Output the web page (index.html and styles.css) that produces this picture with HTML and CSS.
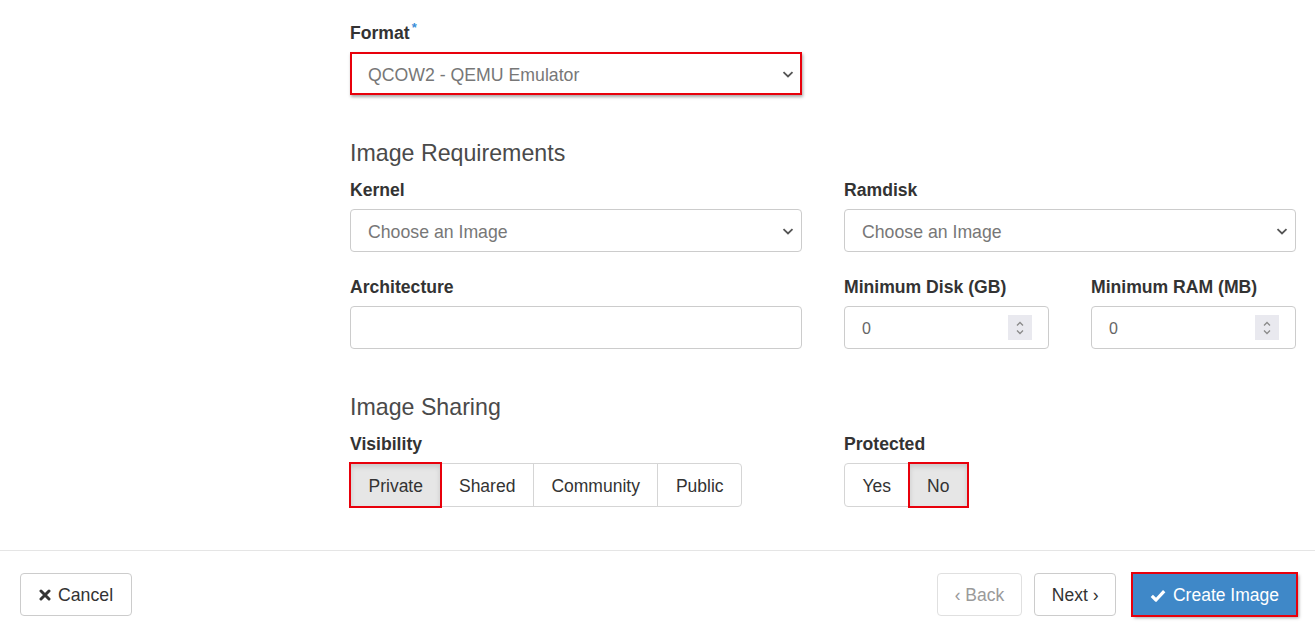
FILE: index.html
```html
<!DOCTYPE html>
<html>
<head>
<meta charset="utf-8">
<link rel="stylesheet" href="styles.css">
</head>
<body>
<div class="page">
  <div class="body">
    <div class="side"></div>
    <div class="form">
      <div class="row2">
        <div class="fg">
          <div class="lbl">Format<span class="req">*</span></div>
          <div class="select hl">
            <span class="val">QCOW2 - QEMU Emulator</span>
            <svg class="chev" width="12" height="7" viewBox="0 0 12 7"><path d="M1.5 1.2 L6 5.5 L10.5 1.2" fill="none" stroke="#555" stroke-width="1.8"/></svg>
          </div>
        </div>
        <div></div>
      </div>

      <h4 class="section first">Image Requirements</h4>
      <div class="row2">
        <div class="fg">
          <div class="lbl">Kernel</div>
          <div class="select">
            <span class="val">Choose an Image</span>
            <svg class="chev" width="12" height="7" viewBox="0 0 12 7"><path d="M1.5 1.2 L6 5.5 L10.5 1.2" fill="none" stroke="#555" stroke-width="1.8"/></svg>
          </div>
        </div>
        <div class="fg">
          <div class="lbl">Ramdisk</div>
          <div class="select">
            <span class="val">Choose an Image</span>
            <svg class="chev" width="12" height="7" viewBox="0 0 12 7"><path d="M1.5 1.2 L6 5.5 L10.5 1.2" fill="none" stroke="#555" stroke-width="1.8"/></svg>
          </div>
        </div>
      </div>
      <div class="row2 gap-top">
        <div class="fg">
          <div class="lbl">Architecture</div>
          <div class="input"></div>
        </div>
        <div class="row2">
          <div class="fg">
            <div class="lbl">Minimum Disk (GB)</div>
            <div class="input num">
              <span class="val">0</span>
              <span class="spin"><svg width="10" height="16" viewBox="0 0 10 16"><path d="M2 5.5 L5 2.5 L8 5.5 M2 10.5 L5 13.5 L8 10.5" fill="none" stroke="#8a8a8a" stroke-width="1.3"/></svg></span>
            </div>
          </div>
          <div class="fg">
            <div class="lbl">Minimum RAM (MB)</div>
            <div class="input num">
              <span class="val">0</span>
              <span class="spin"><svg width="10" height="16" viewBox="0 0 10 16"><path d="M2 5.5 L5 2.5 L8 5.5 M2 10.5 L5 13.5 L8 10.5" fill="none" stroke="#8a8a8a" stroke-width="1.3"/></svg></span>
            </div>
          </div>
        </div>
      </div>

      <h4 class="section">Image Sharing</h4>
      <div class="row2">
        <div class="fg">
          <div class="lbl">Visibility</div>
          <div class="btn-group">
            <span class="gbtn active hlb">Private</span>
            <span class="gbtn">Shared</span>
            <span class="gbtn">Community</span>
            <span class="gbtn">Public</span>
          </div>
        </div>
        <div class="fg">
          <div class="lbl">Protected</div>
          <div class="btn-group">
            <span class="gbtn">Yes</span>
            <span class="gbtn active hlb">No</span>
          </div>
        </div>
      </div>
    </div>
  </div>
  <div class="footer">
    <span class="btn cancel">
      <svg width="12" height="12" viewBox="0 0 12 12"><path d="M2 2 L10 10 M10 2 L2 10" stroke="#333" stroke-width="3" stroke-linecap="round"/></svg>
      Cancel
    </span>
    <div class="actions">
      <span class="btn disabled">‹ Back</span>
      <span class="btn next">Next ›</span>
      <span class="btn primary hlb">
        <svg width="16" height="13" viewBox="0 0 16 13"><path d="M1.8 6.8 L6 11 L14.2 2.2" fill="none" stroke="#fff" stroke-width="3.2" stroke-linejoin="round"/></svg>
        Create Image
      </span>
    </div>
  </div>
</div>
</body>
</html>
```

FILE: styles.css
```css
* { box-sizing: border-box; }
html, body { margin: 0; padding: 0; background: #fff; }
body {
  font-family: "Liberation Sans", Arial, Helvetica, sans-serif;
  font-size: 17.7px;
  color: #333;
}
.page { width: 1315px; height: 635px; overflow: hidden; }
.body {
  display: grid;
  grid-template-columns: 350px 1fr;
  padding: 20px 19px 43px 0;
  border-bottom: 1px solid #e5e5e5;
}
.row2 {
  display: grid;
  grid-template-columns: 1fr 1fr;
  column-gap: 42px;
}
.gap-top { margin-top: 22px; }
.lbl {
  font-weight: 700;
  font-size: 17.6px;
  line-height: 24px;
  height: 24px;
  padding-top: 1px;
  margin-bottom: 8px;
  color: #333;
  white-space: nowrap;
}
.req {
  color: #3a8fd9;
  font-size: 13px;
  vertical-align: top;
  position: relative;
  top: -5px;
  margin-left: 2px;
}
.section {
  margin: 45px 0 11px;
  font-size: 23.2px;
  font-weight: 400;
  line-height: 26px;
  color: #4a4a4a;
}
.select, .input {
  height: 43px;
  border: 1px solid #ccc;
  border-radius: 4px;
  display: flex;
  align-items: center;
  padding: 3px 7px 0 17px;
  color: #777;
  font-size: 17.7px;
  background: #fff;
}
.select .val { flex: 1; }
.select .chev { display: block; margin-top: -2px; }
.hl {
  border: 2px solid #e8000b;
  border-radius: 0;
  padding-left: 16px;
  padding-right: 6px;
  box-shadow: 1px 2px 3px rgba(0,0,0,0.35);
}
.num { padding-right: 16px; padding-top: 0; }
.num .val { flex: 1; font-size: 16px; color: #666; padding-top: 3px; }
.spin {
  width: 24px;
  height: 25px;
  background: #e9e9ef;
  display: flex;
  align-items: center;
  justify-content: center;
}
.btn-group { display: flex; }
.gbtn {
  height: 44px;
  display: flex;
  align-items: center;
  padding: 2px 17.5px 0;
  border: 1px solid #d5d5d5;
  margin-left: -1px;
  color: #333;
  background: #fff;
  font-size: 17.5px;
}
.gbtn:first-child { margin-left: 0; border-radius: 4px 0 0 4px; }
.gbtn:last-child { border-radius: 0 4px 4px 0; }
.gbtn.active {
  background: #e6e6e6;
  box-shadow: inset 0 3px 5px rgba(0,0,0,0.125);
}
.hlb {
  position: relative;
  z-index: 1;
  outline: 2px solid #e8000b;
  outline-offset: -1px;
}
.hlb.gbtn { border-radius: 0; }
.footer {
  display: flex;
  justify-content: space-between;
  align-items: center;
  padding: 22px 18px 20px 20px;
}
.actions { display: flex; align-items: center; }
.btn {
  height: 43px;
  display: inline-flex;
  align-items: center;
  gap: 7px;
  padding: 1px 17px 0;
  border: 1px solid #ccc;
  border-radius: 4px;
  color: #333;
  background: #fff;
  white-space: nowrap;
  font-size: 17.5px;
}
.btn.cancel { padding: 1px 18px 0; font-size: 17.7px; }
.btn.next { padding: 1px 16.5px 0; }
.btn.disabled { color: #9a9a9a; border-color: #e0e0e0; margin-right: 12px; }
.btn.primary {
  background: #3f88c8;
  border-color: #3f88c8;
  color: #fff;
  margin-left: 16px;
  border-radius: 0;
  box-shadow: 2px 2px 3px rgba(0,0,0,0.35);
}
```
